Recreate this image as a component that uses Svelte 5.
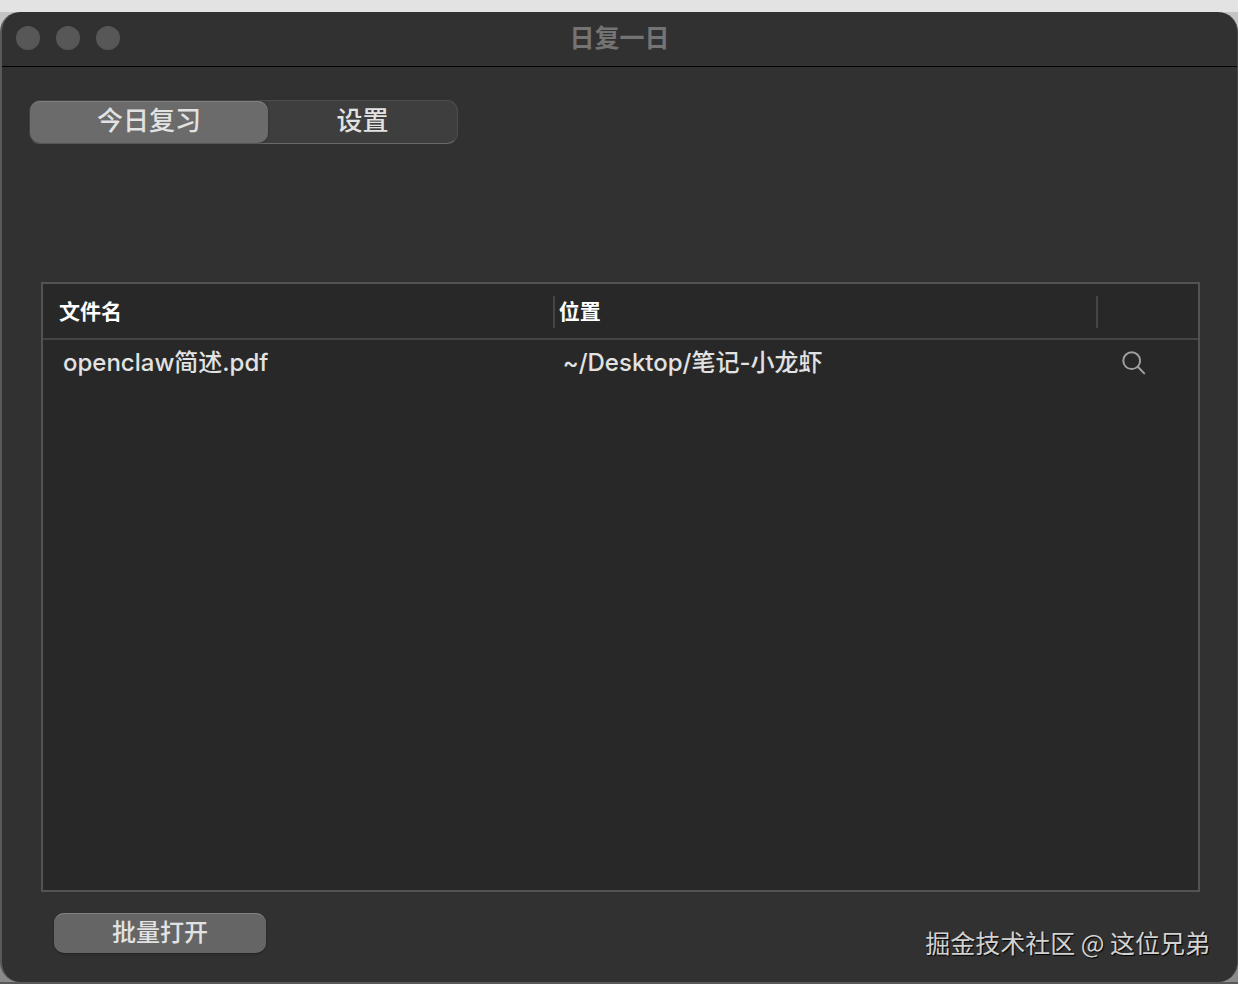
<script lang="ts">
  let tabs = ["今日复习", "设置"];
  let currentTab = $state(0);

  let files = [{ name: "openclaw简述.pdf", location: "~/Desktop/笔记-小龙虾" }];
</script>

<svelte:head>
  <title>日复一日</title>
</svelte:head>

<div class="desktop">
  <div class="window">
    <header class="titlebar">
      <div class="lights">
        <button aria-label="关闭"></button>
        <button aria-label="最小化"></button>
        <button aria-label="缩放"></button>
      </div>
      <h1>日复一日</h1>
    </header>

    <main>
      <div class="tabs" role="tablist">
        {#each tabs as tab, i}
          <button
            class="tab"
            class:active={currentTab === i}
            role="tab"
            aria-selected={currentTab === i}
            onclick={() => (currentTab = i)}
          >
            {tab}
          </button>
        {/each}
      </div>

      <div class="list">
        <table>
          <colgroup>
            <col class="col-name" />
            <col class="col-location" />
            <col />
          </colgroup>
          <thead>
            <tr>
              <th scope="col"><span>文件名</span></th>
              <th scope="col"><span>位置</span></th>
              <th scope="col" aria-label="查看"></th>
            </tr>
          </thead>
          <tbody>
            {#each files as file}
              <tr>
                <td>{file.name}</td>
                <td>{file.location}</td>
                <td class="action">
                  <button class="reveal" aria-label="查看">
                    <svg viewBox="0 0 24 24" width="24" height="24">
                      <circle cx="9.7" cy="9.7" r="8.4" />
                      <path d="M15.8 15.8 L22.2 22.4" />
                    </svg>
                  </button>
                </td>
              </tr>
            {/each}
          </tbody>
        </table>
      </div>

      <footer>
        <button class="open-all">批量打开</button>
        <p class="credit">掘金技术社区 @ 这位兄弟</p>
      </footer>
    </main>
  </div>
</div>

<style>
  :global(body) {
    margin: 0;
    background: #8a8a8a;
  }

  .desktop {
    display: flex;
    min-height: 100vh;
    box-sizing: border-box;
    border-top: 12px solid #e3e3e3;
    border-bottom: 2px solid #595959;
    background: linear-gradient(#c4c4c4, #8a8a8a);
    font-family: Inter, "Noto Sans CJK SC", sans-serif;
    color: #e2e2e2;
  }

  .window {
    flex: 1;
    display: flex;
    flex-direction: column;
    border-left: 2px solid #595959;
    border-right: 1px solid #484848;
    border-radius: 20px;
    background: #313131;
    overflow: hidden;
  }

  .titlebar {
    display: grid;
    grid-template-columns: 1fr auto 1fr;
    align-items: center;
    height: 52px;
    padding: 0 14px 2px;
    border-bottom: 1px solid #000;
  }
  .lights {
    display: flex;
    gap: 16px;
  }
  .lights button {
    width: 24px;
    height: 24px;
    padding: 0;
    border: 0;
    border-radius: 50%;
    background: #575757;
  }
  h1 {
    margin: 0;
    font-size: 25px;
    line-height: 32px;
    font-weight: 700;
    color: #747474;
  }

  main {
    flex: 1;
    display: flex;
    flex-direction: column;
    padding: 33px 27px 24px;
  }

  button {
    font-family: inherit;
    color: inherit;
  }

  .tabs {
    display: flex;
    align-self: flex-start;
    box-sizing: border-box;
    height: 44px;
    border: 1px solid #4d4d4d;
    border-bottom-color: #686868;
    border-radius: 11px;
    background: #3e3e3e;
  }
  .tab {
    width: 189px;
    padding: 0 0 2px;
    border: 0;
    border-radius: 10px;
    background: none;
    font-size: 26px;
    font-weight: 500;
    line-height: 38px;
  }
  .tab:first-child {
    width: 238px;
  }
  .tab.active {
    background: #6b6b6b;
    box-shadow: inset 0 1px #808080, 0 0 2px #222;
  }

  .list {
    flex: 1;
    margin: 138px 10px 0 12px;
    border: 2px solid #535353;
    background: #282828;
  }
  table {
    width: 100%;
    table-layout: fixed;
    border-collapse: separate;
    border-spacing: 0;
  }
  .col-name {
    width: 44.3%;
  }
  .col-location {
    width: 47%;
  }

  th {
    height: 52px;
    padding: 2px 0 0;
    border-bottom: 2px solid #444;
    text-align: left;
    font-size: 21px;
    font-weight: 700;
    color: #fff;
  }
  th span {
    display: block;
    padding-left: 4px;
    border-right: 2px solid #464646;
    line-height: 32px;
  }
  th:first-child span {
    padding-left: 16px;
  }

  td {
    height: 46px;
    padding: 0 8px;
    font-size: 24px;
    font-weight: 500;
    line-height: 32px;
  }
  td:first-child {
    padding-left: 20px;
  }
  .action {
    padding-left: 24px;
  }
  .reveal {
    display: block;
    padding: 0;
    border: 0;
    background: none;
  }
  .reveal svg {
    display: block;
    fill: none;
    stroke: #a0a0a0;
    stroke-width: 2;
    stroke-linecap: round;
  }

  footer {
    display: flex;
    justify-content: space-between;
    align-items: flex-start;
    padding: 21px 0 0 25px;
  }
  .open-all {
    width: 212px;
    height: 40px;
    padding: 0;
    border: 0;
    border-radius: 10px;
    background: #656565;
    box-shadow: inset 0 1px #808080, 0 1px 2px #222;
    font-size: 24px;
    font-weight: 500;
    line-height: 38px;
  }
  .credit {
    margin: 13px 0 0;
    font-family: "Noto Sans CJK SC", sans-serif;
    font-size: 25px;
    line-height: 32px;
    color: #d2d2d2;
    text-shadow: 1px 1px 1px #000;
  }
</style>
